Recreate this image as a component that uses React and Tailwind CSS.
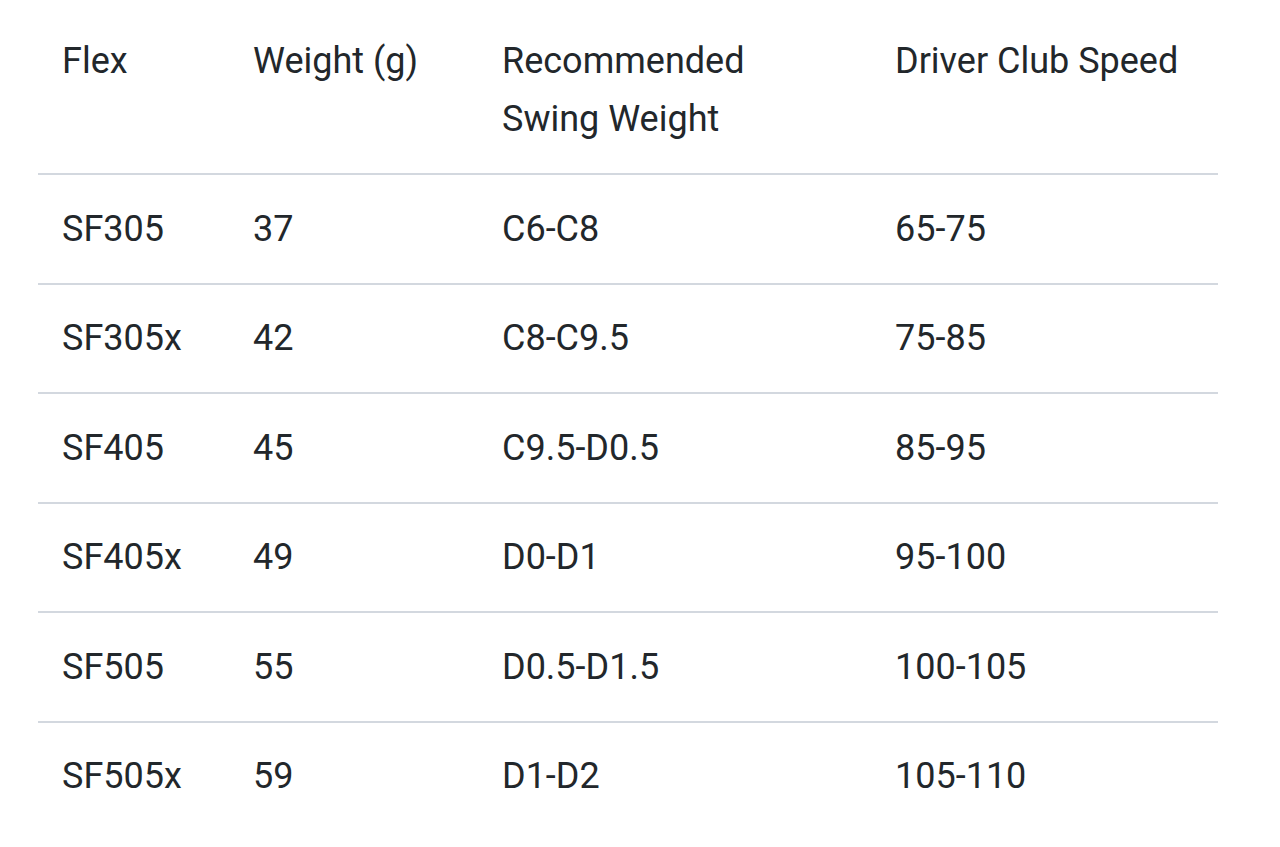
const rows = [
  ["SF305", "37", "C6-C8", "65-75"],
  ["SF305x", "42", "C8-C9.5", "75-85"],
  ["SF405", "45", "C9.5-D0.5", "85-95"],
  ["SF405x", "49", "D0-D1", "95-100"],
  ["SF505", "55", "D0.5-D1.5", "100-105"],
  ["SF505x", "59", "D1-D2", "105-110"],
];

export default function App() {
  return (
    <div
      className="min-h-[847px] bg-white pl-[38px] pt-[7px] text-[#22272b]"
      style={{ fontFamily: "Roboto, 'Liberation Sans', sans-serif" }}
    >
      <table className="w-[1180px] table-fixed border-collapse text-[36px] leading-[58px]">
        <colgroup>
          <col className="w-[191px]" />
          <col className="w-[249px]" />
          <col className="w-[393px]" />
          <col className="w-[347px]" />
        </colgroup>
        <thead>
          <tr className="border-b-2 border-[#d3d8df]">
            <th className="px-6 py-[25px] text-left align-top font-normal">Flex</th>
            <th className="px-6 py-[25px] text-left align-top font-normal">Weight (g)</th>
            <th className="px-6 py-[25px] text-left align-top font-normal">
              Recommended
              <br />
              Swing Weight
            </th>
            <th className="px-6 py-[25px] text-left align-top font-normal whitespace-nowrap">
              Driver Club Speed
            </th>
          </tr>
        </thead>
        <tbody>
          {rows.map((r, i) => (
            <tr
              key={r[0]}
              className={i < rows.length - 1 ? "border-b-2 border-[#d3d8df]" : ""}
            >
              {r.map((c, j) => (
                <td key={j} className="px-6 py-[24.75px]">
                  {c}
                </td>
              ))}
            </tr>
          ))}
        </tbody>
      </table>
    </div>
  );
}
